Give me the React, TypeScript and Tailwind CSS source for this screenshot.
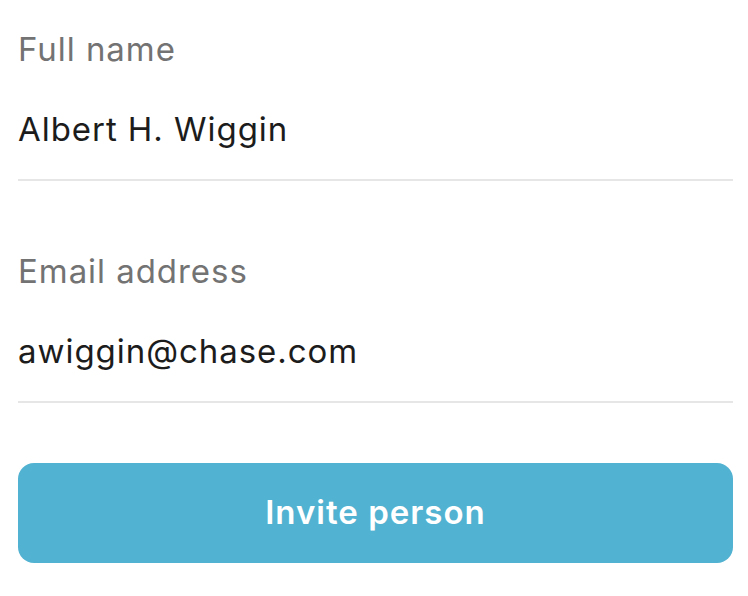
type FieldProps = {
  label: string;
  value: string;
  type?: string;
};

const Field = ({ label, value, type = "text" }: FieldProps) => {
  return (
    <label className="flex flex-col border-b-2 border-[#e6e6e6] pb-[30px]">
      <span className="text-[33px] leading-[40px] tracking-[0.95px] text-[#737373]">{label}</span>
      <input
        type={type}
        defaultValue={value}
        className="mt-[40px] h-[40px] w-full bg-transparent p-0 text-[33px] leading-[40px] tracking-[0.95px] text-[#1c1c1c] outline-none"
      />
    </label>
  );
};

export default function App() {
  return (
    <div
      className="min-h-screen bg-white pt-[29px] pl-[18px] pr-[15px]"
      style={{ fontFamily: "Inter, 'Noto Sans', sans-serif" }}
    >
      <form className="flex flex-col" onSubmit={(e) => e.preventDefault()}>
        <Field label="Full name" value="Albert H. Wiggin" />
        <div className="mt-[70px]">
          <Field label="Email address" value="awiggin@chase.com" type="email" />
        </div>
        <button
          type="submit"
          className="mt-[60px] h-[100px] w-full rounded-[16px] bg-[#52b2d1] text-[33px] font-semibold tracking-[1px] text-white"
        >
          Invite person
        </button>
      </form>
    </div>
  );
}
